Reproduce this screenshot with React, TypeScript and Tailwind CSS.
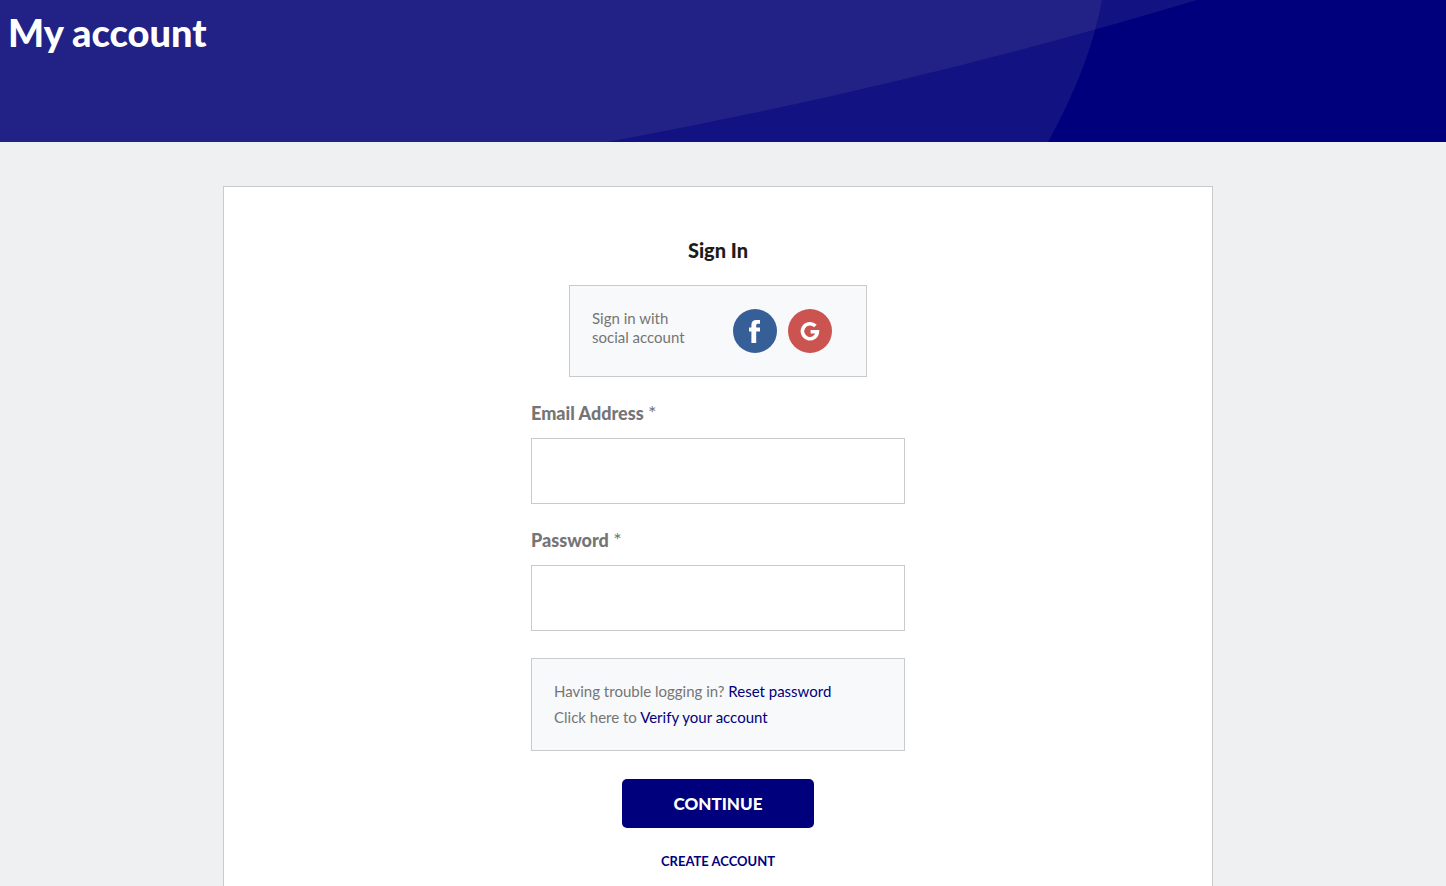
import React from "react";

interface FieldProps {
  id: string;
  label: string;
  type: "email" | "password";
}

const HeroCurves = () => (
  <svg
    className="absolute inset-0 w-full h-full"
    viewBox="0 0 1446 142"
    preserveAspectRatio="xMaxYMin slice"
    aria-hidden="true"
  >
    <path d="M0 0H1102Q1090 66 1048 142H0Z" fill="#ffffc8" fillOpacity="0.07" />
    <path d="M0 0H1197Q911 86 607 142H0Z" fill="#ffffc8" fillOpacity="0.07" />
  </svg>
);

const Hero = () => (
  <header className="relative h-[142px] overflow-hidden bg-[#00007d]">
    <HeroCurves />
    <h1 className="relative px-2 pt-2 text-[38px] leading-[48px] font-black text-white">
      My account
    </h1>
  </header>
);

const FacebookIcon = () => (
  <svg className="w-11 h-11" viewBox="0 0 44 44" aria-hidden="true">
    <circle cx="22" cy="22" r="22" fill="#365f98" />
    <path
      d="M18.4 34V22.4H16V18.6H18.4V16C18.4 12.7 20.1 11 23.4 11H27V14.8H25.1C23.8 14.8 23.2 15.4 23.2 16.6V18.6H27V22.4H23.2V34Z"
      fill="#fff"
    />
  </svg>
);

const GoogleIcon = () => (
  <svg className="w-11 h-11" viewBox="0 0 44 44" aria-hidden="true">
    <circle cx="22" cy="22" r="22" fill="#cb5451" />
    <path
      d="M27.4 17.1A7.5 7.5 0 1 0 29.4 22.8H22.6"
      fill="none"
      stroke="#fff"
      strokeWidth="3.6"
    />
  </svg>
);

const SocialSignIn = () => (
  <div className="mx-[38px] mt-[22px] flex justify-between border border-[#c8cacc] bg-[#f8f9fb] pt-[23px] pr-[34px] pb-[23px] pl-[22px]">
    <p className="text-[15px] leading-[19px] text-[#757575]">
      Sign in with
      <br />
      social account
    </p>
    <div className="flex items-start gap-[11px]">
      <button type="button" aria-label="Sign in with Facebook">
        <FacebookIcon />
      </button>
      <button type="button" aria-label="Sign in with Google">
        <GoogleIcon />
      </button>
    </div>
  </div>
);

const Field = ({ id, label, type }: FieldProps) => (
  <div className="mt-6">
    <label
      htmlFor={id}
      className="block text-[18px] leading-6 font-black text-[#757575]"
    >
      {label} <span className="text-[20px] leading-5 font-normal">*</span>
    </label>
    <input
      id={id}
      name={id}
      type={type}
      required
      className="mt-[13px] block h-[66px] w-full border border-[#c8cacc] bg-white px-4 text-base text-[#212121]"
    />
  </div>
);

const SignInForm = () => (
  <form className="mx-auto flex w-full max-w-[374px] flex-col">
    <h2 className="mt-[51px] text-center text-[20px] leading-[25px] font-black text-[#1c1c1c]">
      Sign In
    </h2>
    <SocialSignIn />
    <Field id="email" label="Email Address" type="email" />
    <Field id="password" label="Password" type="password" />
    <div className="mt-[27px] border border-[#c8cacc] bg-[#f8f9fb] px-[22px] pt-[19px] pb-5 text-[15px] leading-[26px] text-[#757575]">
      <p>
        Having trouble logging in?{" "}
        <a href="#reset" className="text-[#00007d]">
          Reset password
        </a>
      </p>
      <p>
        Click here to{" "}
        <a href="#verify" className="text-[#00007d]">
          Verify your account
        </a>
      </p>
    </div>
    <button
      type="submit"
      className="mx-auto mt-7 h-[49px] w-[192px] rounded-[5px] bg-[#00007d] text-[17px] font-black text-white"
    >
      CONTINUE
    </button>
    <a
      href="#create"
      className="mx-auto mt-6 mb-2 text-[13px] leading-[18px] font-bold text-[#00007d]"
    >
      CREATE ACCOUNT
    </a>
  </form>
);

const App = () => {
  return (
    <div className="flex min-h-screen flex-col bg-[#eff0f2] font-[Lato,sans-serif]">
      <Hero />
      <main className="flex flex-1 flex-col pt-11 pr-[10px]">
        <div className="mx-auto w-full max-w-[990px] flex-1 border border-b-0 border-[#c8cacc] bg-white">
          <SignInForm />
        </div>
      </main>
    </div>
  );
};

export default App;
